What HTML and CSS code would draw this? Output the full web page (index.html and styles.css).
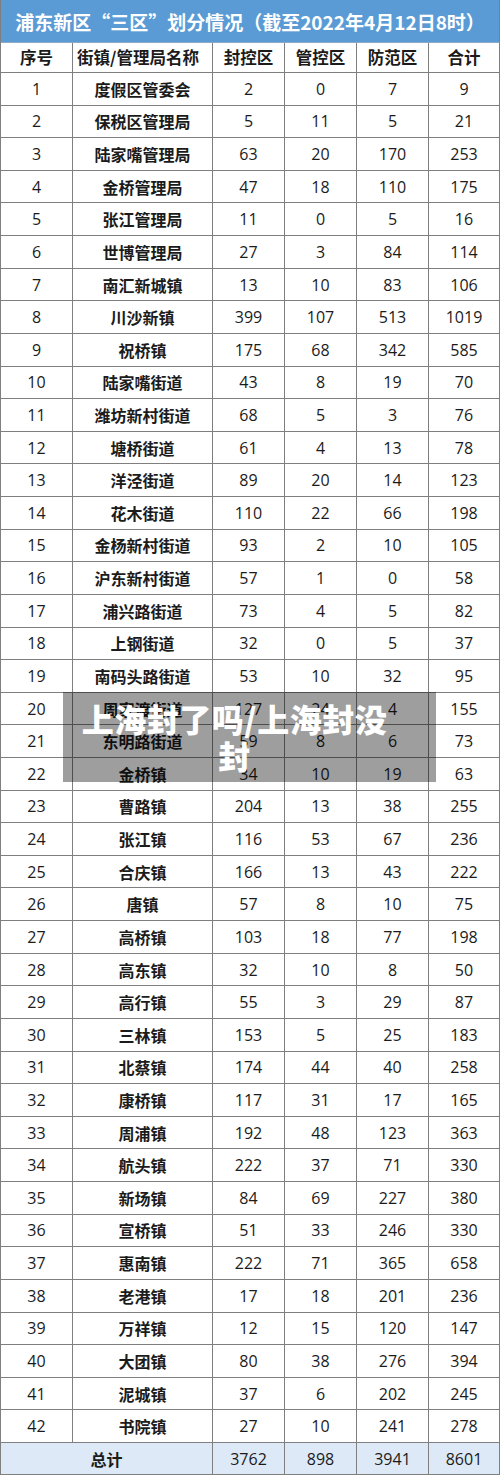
FILE: index.html
```html
<!DOCTYPE html>
<html lang="zh-CN">
<head>
<meta charset="utf-8">
<title>浦东新区“三区”划分情况</title>
<link rel="stylesheet" href="styles.css">
</head>
<body>
<div class="page">
  <div class="sheet">
    <div class="cell title">浦东新区“三区”划分情况（截至2022年4月12日8时）</div>
    <div class="cell head">序号</div><div class="cell head left">街镇/管理局名称</div><div class="cell head">封控区</div><div class="cell head">管控区</div><div class="cell head">防范区</div><div class="cell head">合计</div>
    <div class="cell">1</div><div class="cell name">度假区管委会</div><div class="cell">2</div><div class="cell">0</div><div class="cell">7</div><div class="cell">9</div>
    <div class="cell">2</div><div class="cell name">保税区管理局</div><div class="cell">5</div><div class="cell">11</div><div class="cell">5</div><div class="cell">21</div>
    <div class="cell">3</div><div class="cell name">陆家嘴管理局</div><div class="cell">63</div><div class="cell">20</div><div class="cell">170</div><div class="cell">253</div>
    <div class="cell">4</div><div class="cell name">金桥管理局</div><div class="cell">47</div><div class="cell">18</div><div class="cell">110</div><div class="cell">175</div>
    <div class="cell">5</div><div class="cell name">张江管理局</div><div class="cell">11</div><div class="cell">0</div><div class="cell">5</div><div class="cell">16</div>
    <div class="cell">6</div><div class="cell name">世博管理局</div><div class="cell">27</div><div class="cell">3</div><div class="cell">84</div><div class="cell">114</div>
    <div class="cell">7</div><div class="cell name">南汇新城镇</div><div class="cell">13</div><div class="cell">10</div><div class="cell">83</div><div class="cell">106</div>
    <div class="cell">8</div><div class="cell name">川沙新镇</div><div class="cell">399</div><div class="cell">107</div><div class="cell">513</div><div class="cell">1019</div>
    <div class="cell">9</div><div class="cell name">祝桥镇</div><div class="cell">175</div><div class="cell">68</div><div class="cell">342</div><div class="cell">585</div>
    <div class="cell">10</div><div class="cell name">陆家嘴街道</div><div class="cell">43</div><div class="cell">8</div><div class="cell">19</div><div class="cell">70</div>
    <div class="cell">11</div><div class="cell name">潍坊新村街道</div><div class="cell">68</div><div class="cell">5</div><div class="cell">3</div><div class="cell">76</div>
    <div class="cell">12</div><div class="cell name">塘桥街道</div><div class="cell">61</div><div class="cell">4</div><div class="cell">13</div><div class="cell">78</div>
    <div class="cell">13</div><div class="cell name">洋泾街道</div><div class="cell">89</div><div class="cell">20</div><div class="cell">14</div><div class="cell">123</div>
    <div class="cell">14</div><div class="cell name">花木街道</div><div class="cell">110</div><div class="cell">22</div><div class="cell">66</div><div class="cell">198</div>
    <div class="cell">15</div><div class="cell name">金杨新村街道</div><div class="cell">93</div><div class="cell">2</div><div class="cell">10</div><div class="cell">105</div>
    <div class="cell">16</div><div class="cell name">沪东新村街道</div><div class="cell">57</div><div class="cell">1</div><div class="cell">0</div><div class="cell">58</div>
    <div class="cell">17</div><div class="cell name">浦兴路街道</div><div class="cell">73</div><div class="cell">4</div><div class="cell">5</div><div class="cell">82</div>
    <div class="cell">18</div><div class="cell name">上钢街道</div><div class="cell">32</div><div class="cell">0</div><div class="cell">5</div><div class="cell">37</div>
    <div class="cell">19</div><div class="cell name">南码头路街道</div><div class="cell">53</div><div class="cell">10</div><div class="cell">32</div><div class="cell">95</div>
    <div class="cell">20</div><div class="cell name">周家渡街道</div><div class="cell">127</div><div class="cell">24</div><div class="cell">4</div><div class="cell">155</div>
    <div class="cell">21</div><div class="cell name">东明路街道</div><div class="cell">59</div><div class="cell">8</div><div class="cell">6</div><div class="cell">73</div>
    <div class="cell">22</div><div class="cell name">金桥镇</div><div class="cell">34</div><div class="cell">10</div><div class="cell">19</div><div class="cell">63</div>
    <div class="cell">23</div><div class="cell name">曹路镇</div><div class="cell">204</div><div class="cell">13</div><div class="cell">38</div><div class="cell">255</div>
    <div class="cell">24</div><div class="cell name">张江镇</div><div class="cell">116</div><div class="cell">53</div><div class="cell">67</div><div class="cell">236</div>
    <div class="cell">25</div><div class="cell name">合庆镇</div><div class="cell">166</div><div class="cell">13</div><div class="cell">43</div><div class="cell">222</div>
    <div class="cell">26</div><div class="cell name">唐镇</div><div class="cell">57</div><div class="cell">8</div><div class="cell">10</div><div class="cell">75</div>
    <div class="cell">27</div><div class="cell name">高桥镇</div><div class="cell">103</div><div class="cell">18</div><div class="cell">77</div><div class="cell">198</div>
    <div class="cell">28</div><div class="cell name">高东镇</div><div class="cell">32</div><div class="cell">10</div><div class="cell">8</div><div class="cell">50</div>
    <div class="cell">29</div><div class="cell name">高行镇</div><div class="cell">55</div><div class="cell">3</div><div class="cell">29</div><div class="cell">87</div>
    <div class="cell">30</div><div class="cell name">三林镇</div><div class="cell">153</div><div class="cell">5</div><div class="cell">25</div><div class="cell">183</div>
    <div class="cell">31</div><div class="cell name">北蔡镇</div><div class="cell">174</div><div class="cell">44</div><div class="cell">40</div><div class="cell">258</div>
    <div class="cell">32</div><div class="cell name">康桥镇</div><div class="cell">117</div><div class="cell">31</div><div class="cell">17</div><div class="cell">165</div>
    <div class="cell">33</div><div class="cell name">周浦镇</div><div class="cell">192</div><div class="cell">48</div><div class="cell">123</div><div class="cell">363</div>
    <div class="cell">34</div><div class="cell name">航头镇</div><div class="cell">222</div><div class="cell">37</div><div class="cell">71</div><div class="cell">330</div>
    <div class="cell">35</div><div class="cell name">新场镇</div><div class="cell">84</div><div class="cell">69</div><div class="cell">227</div><div class="cell">380</div>
    <div class="cell">36</div><div class="cell name">宣桥镇</div><div class="cell">51</div><div class="cell">33</div><div class="cell">246</div><div class="cell">330</div>
    <div class="cell">37</div><div class="cell name">惠南镇</div><div class="cell">222</div><div class="cell">71</div><div class="cell">365</div><div class="cell">658</div>
    <div class="cell">38</div><div class="cell name">老港镇</div><div class="cell">17</div><div class="cell">18</div><div class="cell">201</div><div class="cell">236</div>
    <div class="cell">39</div><div class="cell name">万祥镇</div><div class="cell">12</div><div class="cell">15</div><div class="cell">120</div><div class="cell">147</div>
    <div class="cell">40</div><div class="cell name">大团镇</div><div class="cell">80</div><div class="cell">38</div><div class="cell">276</div><div class="cell">394</div>
    <div class="cell">41</div><div class="cell name">泥城镇</div><div class="cell">37</div><div class="cell">6</div><div class="cell">202</div><div class="cell">245</div>
    <div class="cell">42</div><div class="cell name">书院镇</div><div class="cell">27</div><div class="cell">10</div><div class="cell">241</div><div class="cell">278</div>
    <div class="cell total label">总计</div><div class="cell total">3762</div><div class="cell total">898</div><div class="cell total">3941</div><div class="cell total">8601</div>
  </div>
  <div class="banner"><span class="banner-text">上海封了吗/上海封没封</span></div>
</div>
</body>
</html>
```

FILE: styles.css
```css
* { box-sizing: border-box; }
html, body { margin: 0; padding: 0; background: #ffffff; }
.page {
  position: relative;
  width: 500px;
  height: 1475px;
  overflow: hidden;
}
.sheet {
  display: grid;
  width: 500px;
  height: 1475px;
  grid-template-columns: 72px 140px 72px 72px 72px 71px;
  grid-template-rows: 43px 30px repeat(42, 1fr) 32px;
  border-left: 1px solid #7f7f7f;
  font-family: "Open Sans", "Noto Sans CJK SC", sans-serif;
  color: #1b1b1b;
}
.cell {
  display: flex;
  align-items: center;
  justify-content: center;
  border-right: 1px solid #7f7f7f;
  border-bottom: 1px solid #7f7f7f;
  font-size: 16px;
  line-height: 1;
  white-space: nowrap;
}
.title {
  grid-column: 1 / -1;
  background: #5b9bd5;
  color: #ffffff;
  font-family: "Noto Sans CJK SC", sans-serif;
  font-weight: 700;
  font-size: 19px;
  border-bottom: 1px solid #8da9c4;
}
.head {
  font-family: "Noto Sans CJK SC", sans-serif;
  font-weight: 700;
  font-size: 16.5px;
}
.head.left {
  justify-content: flex-start;
  padding-left: 4px;
}
.name {
  font-family: "Noto Sans CJK SC", sans-serif;
  font-weight: 700;
}
.total {
  background: #dde9f6;
}
.total.label {
  grid-column: 1 / 3;
  font-family: "Noto Sans CJK SC", sans-serif;
  font-weight: 700;
}
.banner {
  position: absolute;
  left: 63px;
  top: 692px;
  width: 373px;
  height: 90px;
  background: rgba(0, 0, 0, 0.38);
  padding: 8px 38px 8px 8px;
  text-align: center;
}
.banner-text {
  color: #ffffff;
  font-family: "Noto Sans CJK SC", sans-serif;
  font-weight: 900;
  font-size: 32px;
  line-height: 37px;
  letter-spacing: 0.5px;
}
```
